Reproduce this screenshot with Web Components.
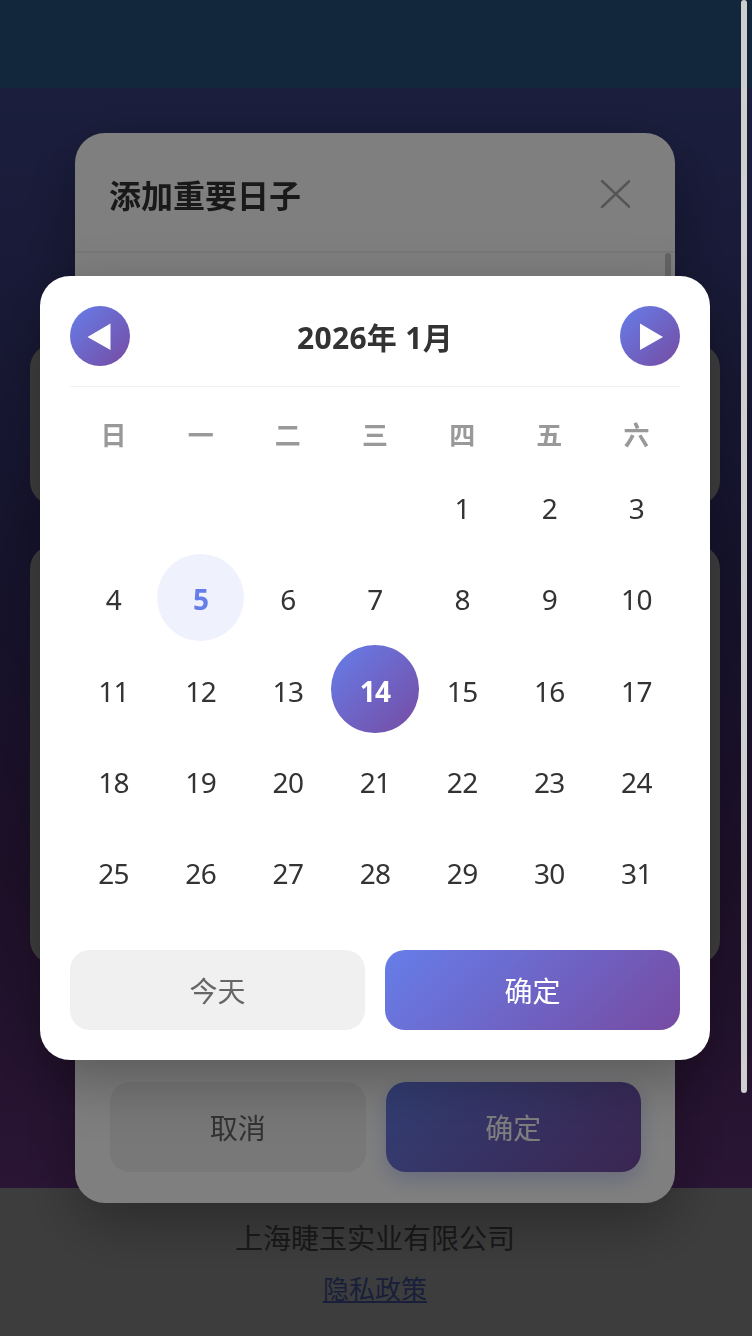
<!DOCTYPE html>
<html lang="zh">
<head>
<meta charset="utf-8">
<title>添加重要日子</title>
<style>
  html, body { margin: 0; padding: 0; height: 100%; overflow: hidden; background: #1a1a2e; }
  body { font-family: "Noto Sans", "Noto Sans CJK SC", sans-serif; }
</style>
</head>
<body>
<page-shell>
  <site-footer slot="footer"></site-footer>
</page-shell>

<modal-layer>
  <date-form></date-form>
</modal-layer>

<modal-layer>
  <calendar-picker year="2026" month="1" today="5" selected="14"></calendar-picker>
</modal-layer>

<page-scrollbar></page-scrollbar>

<script>
class PageShell extends HTMLElement {
  constructor() {
    super();
    this.attachShadow({ mode: 'open' });
    this.shadowRoot.innerHTML = `
      <style>
        :host { display: flex; flex-direction: column; height: 1336px; }
        .top { height: 88px; background: rgb(72, 152, 240); flex: none; }
        main {
          flex: 1;
          display: flex;
          flex-direction: column;
          gap: 40px;
          padding: 256px 32px 0 30px;
        }
        .wrap {
          flex: 1;
          display: flex;
          flex-direction: column;
          background: linear-gradient(180deg, rgb(108, 124, 248) 0%, rgb(88, 76, 178) 45%, rgb(118, 66, 160) 72%, rgb(168, 84, 212) 100%);
        }
        .card { background: #fff; border-radius: 24px; }
        .card.one { height: 161px; }
        .card.two { height: 419px; }
      </style>
      <div class="top"></div>
      <div class="wrap">
        <main>
          <div class="card one"></div>
          <div class="card two"></div>
        </main>
      </div>
      <slot name="footer"></slot>
    `;
  }
}

class SiteFooter extends HTMLElement {
  constructor() {
    super();
    this.attachShadow({ mode: 'open' });
    this.shadowRoot.innerHTML = `
      <style>
        :host {
          display: flex;
          flex-direction: column;
          align-items: center;
          height: 148px;
          box-sizing: border-box;
          padding: 30px 2px 0 0;
          gap: 13px;
          background: #f5f5f5;
          color: #666;
        }
        p { margin: 0; font-size: 28px; line-height: 40px; }
        a { font-size: 26px; line-height: 37px; color: #667eea; text-decoration: underline; }
      </style>
      <p>上海睫玉实业有限公司</p>
      <a href="#">隐私政策</a>
    `;
  }
}

class ModalLayer extends HTMLElement {
  constructor() {
    super();
    this.attachShadow({ mode: 'open' });
    this.shadowRoot.innerHTML = `
      <style>
        :host {
          position: fixed;
          top: 0;
          left: 0;
          width: 752px;
          height: 1336px;
          box-sizing: border-box;
          padding-right: 2px;
          display: flex;
          align-items: center;
          justify-content: center;
          background: rgba(0, 0, 0, 0.5);
        }
      </style>
      <slot></slot>
    `;
  }
}

class DateForm extends HTMLElement {
  constructor() {
    super();
    this.attachShadow({ mode: 'open' });
    this.shadowRoot.innerHTML = `
      <style>
        :host {
          display: flex;
          flex-direction: column;
          width: 600px;
          height: 1070px;
          background: #fff;
          border-radius: 30px;
          box-shadow: 0 20px 60px rgba(0, 0, 0, 0.3);
          overflow: hidden;
          position: relative;
        }
        header {
          display: flex;
          justify-content: space-between;
          align-items: center;
          height: 120px;
          box-sizing: border-box;
          padding: 4px 45px 0 34px;
          border-bottom: 2px solid #eee;
          flex: none;
        }
        h2 { margin: 0; font-size: 32px; font-weight: 700; color: #333; }
        svg { display: block; }
        .body { flex: 1; position: relative; }
        .thumb {
          position: absolute;
          top: 0;
          right: 4px;
          width: 6px;
          height: 300px;
          border-radius: 3px;
          background: #c8c8c8;
        }
        footer { display: flex; gap: 20px; padding: 30px 34px 31px 35px; flex: none; }
        button {
          flex: 1;
          height: 90px;
          border: 0;
          border-radius: 20px;
          font: inherit;
          font-size: 28px;
        }
        .cancel { background: #f0f0f0; color: #666; }
        .ok {
          background: linear-gradient(135deg, #667eea 0%, #764ba2 100%);
          color: #fff;
          box-shadow: 0 8px 20px rgba(102, 126, 234, 0.3);
        }
      </style>
      <header>
        <h2>添加重要日子</h2>
        <svg width="30" height="28" viewBox="0 0 30 28" fill="none" stroke="#aaa" stroke-width="2.5" stroke-linecap="round">
          <path d="M2 1 29.5 27M29.5 1 2 27"/>
        </svg>
      </header>
      <div class="body"><div class="thumb"></div></div>
      <footer>
        <button class="cancel">取消</button>
        <button class="ok">确定</button>
      </footer>
    `;
  }
}

class CalendarPicker extends HTMLElement {
  constructor() {
    super();
    this.attachShadow({ mode: 'open' });
  }

  connectedCallback() {
    const year = +this.getAttribute('year');
    const month = +this.getAttribute('month');
    const today = +this.getAttribute('today');
    const selected = +this.getAttribute('selected');
    const blanks = new Date(year, month - 1, 1).getDay();
    const total = new Date(year, month, 0).getDate();

    let cells = '<div class="day"></div>'.repeat(blanks);
    for (let d = 1; d <= total; d++) {
      let cls = 'day';
      if (d === today) cls += ' today';
      if (d === selected) cls += ' selected';
      cells += `<div class="${cls}">${d}</div>`;
    }
    const weeks = ['日', '一', '二', '三', '四', '五', '六']
      .map(w => `<div class="week">${w}</div>`).join('');

    this.shadowRoot.innerHTML = `
      <style>
        :host {
          display: block;
          width: 670px;
          box-sizing: border-box;
          padding: 30px;
          background: #fff;
          border-radius: 30px;
          box-shadow: 0 20px 60px rgba(0, 0, 0, 0.3);
        }
        .head {
          display: flex;
          align-items: center;
          justify-content: space-between;
          padding-bottom: 20px;
          border-bottom: 1px solid #f0f0f0;
        }
        .title { font-size: 30px; font-weight: 700; color: #333; letter-spacing: 0.3px; }
        .nav {
          width: 60px;
          height: 60px;
          border-radius: 50%;
          background: linear-gradient(135deg, #667eea 0%, #764ba2 100%);
        }
        .nav svg { display: block; }
        .weeks, .days { display: grid; grid-template-columns: repeat(7, 1fr); }
        .weeks { padding: 29px 0 8px; }
        .week {
          text-align: center;
          font-size: 26px;
          font-weight: 700;
          line-height: 39px;
          color: #999;
        }
        .days { row-gap: 4px; }
        .day {
          aspect-ratio: 1;
          display: flex;
          align-items: center;
          justify-content: center;
          padding-top: 3px;
          box-sizing: border-box;
          font-size: 28px;
          letter-spacing: -0.6px;
          color: #333;
          border-radius: 50%;
        }
        .today { background: rgba(102, 126, 234, 0.1); color: #667eea; font-weight: 700; }
        .selected {
          background: linear-gradient(135deg, #667eea 0%, #764ba2 100%);
          color: #fff;
          font-weight: 700;
        }
        .actions { display: flex; gap: 20px; margin-top: 35px; }
        button {
          flex: 1;
          height: 80px;
          border: 0;
          border-radius: 20px;
          font: inherit;
          font-size: 28px;
        }
        .now { background: #f0f0f0; color: #666; }
        .ok { background: linear-gradient(135deg, #667eea 0%, #764ba2 100%); color: #fff; }
      </style>
      <div class="head">
        <div class="nav">
          <svg width="60" height="60" viewBox="0 0 60 60"><polygon points="17.5,31 40.5,17.5 40.5,44" fill="#fff"/></svg>
        </div>
        <div class="title">${year}年 ${month}月</div>
        <div class="nav">
          <svg width="60" height="60" viewBox="0 0 60 60"><polygon points="43,31 20,17.5 20,44" fill="#fff"/></svg>
        </div>
      </div>
      <div class="weeks">${weeks}</div>
      <div class="days">${cells}</div>
      <div class="actions">
        <button class="now">今天</button>
        <button class="ok">确定</button>
      </div>
    `;
  }
}

class PageScrollbar extends HTMLElement {
  constructor() {
    super();
    this.attachShadow({ mode: 'open' });
    this.shadowRoot.innerHTML = `
      <style>
        :host {
          position: fixed;
          top: 0;
          left: 741px;
          width: 6px;
          height: 1093px;
          border-radius: 3px;
          background: #cfcfcf;
        }
      </style>
    `;
  }
}

customElements.define('page-shell', PageShell);
customElements.define('site-footer', SiteFooter);
customElements.define('modal-layer', ModalLayer);
customElements.define('date-form', DateForm);
customElements.define('calendar-picker', CalendarPicker);
customElements.define('page-scrollbar', PageScrollbar);
</script>
</body>
</html>
